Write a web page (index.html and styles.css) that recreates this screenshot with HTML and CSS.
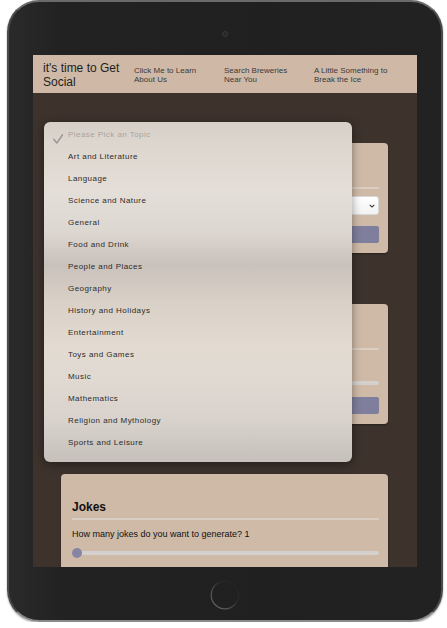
FILE: index.html
```html
<!DOCTYPE html>
<html lang="en">
<head>
<meta charset="utf-8">
<title>it's time to Get Social</title>
<link rel="stylesheet" href="styles.css">
</head>
<body>
<div class="device">
  <div class="bezel-top"><span class="camera"></span></div>
  <div class="screen">
    <header class="site-header">
      <h1 class="brand">it's time to Get Social</h1>
      <a class="nav-link" href="#">Click Me to Learn About Us</a>
      <a class="nav-link" href="#">Search Breweries Near You</a>
      <a class="nav-link" href="#">A Little Something to Break the Ice</a>
    </header>
    <main class="content">
      <section class="card">
        <h2 class="card-title">Trivia</h2>
        <hr class="rule">
        <div class="select-wrap">
          <select class="select">
            <option>Please Pick an Topic</option>
            <option>Art and Literature</option>
          </select>
          <svg class="chevron" viewBox="0 0 8 5" width="6" height="4"><path d="M1 1 L4 4 L7 1" fill="none" stroke="#333" stroke-width="1.4"/></svg>
        </div>
        <button class="btn">Get Questions</button>
      </section>
      <section class="card">
        <h2 class="card-title">Would You Rather</h2>
        <hr class="rule">
        <label class="label">How many questions do you want to generate? 1</label>
        <input class="range" type="range" min="1" max="10" value="1">
        <button class="btn">Generate</button>
      </section>
      <section class="card">
        <h2 class="card-title">Jokes</h2>
        <hr class="rule">
        <label class="label">How many jokes do you want to generate? 1</label>
        <input class="range" type="range" min="1" max="10" value="1">
        <button class="btn">Generate</button>
      </section>
    </main>
    <ul class="picker">
      <li class="option placeholder"><svg class="mark" viewBox="0 0 10 10" width="10" height="10"><path d="M0.8 5.2 L3.8 9 L9.6 0.8" fill="none" stroke="#9a9794" stroke-width="1.5" stroke-linecap="round" stroke-linejoin="round"/></svg><span>Please Pick an Topic</span></li>
      <li class="option"><span class="mark"></span><span>Art and Literature</span></li>
      <li class="option"><span class="mark"></span><span>Language</span></li>
      <li class="option"><span class="mark"></span><span>Science and Nature</span></li>
      <li class="option"><span class="mark"></span><span>General</span></li>
      <li class="option"><span class="mark"></span><span>Food and Drink</span></li>
      <li class="option"><span class="mark"></span><span>People and Places</span></li>
      <li class="option"><span class="mark"></span><span>Geography</span></li>
      <li class="option"><span class="mark"></span><span>History and Holidays</span></li>
      <li class="option"><span class="mark"></span><span>Entertainment</span></li>
      <li class="option"><span class="mark"></span><span>Toys and Games</span></li>
      <li class="option"><span class="mark"></span><span>Music</span></li>
      <li class="option"><span class="mark"></span><span>Mathematics</span></li>
      <li class="option"><span class="mark"></span><span>Religion and Mythology</span></li>
      <li class="option"><span class="mark"></span><span>Sports and Leisure</span></li>
    </ul>
  </div>
  <div class="bezel-bottom">
    <svg class="home" viewBox="0 0 30 30" width="30" height="30">
      <defs>
        <linearGradient id="homeGrad" x1="1" y1="0" x2="0" y2="1">
          <stop offset="0" stop-color="#202020"/>
          <stop offset="0.4" stop-color="#2a2a2a"/>
          <stop offset="0.7" stop-color="#555"/>
          <stop offset="1" stop-color="#6a6a6a"/>
        </linearGradient>
      </defs>
      <circle cx="15" cy="15" r="13.8" fill="none" stroke="url(#homeGrad)" stroke-width="1.2"/>
    </svg>
  </div>
</div>
</body>
</html>
```
FILE: styles.css
```css
* { box-sizing: border-box; }

html, body {
  margin: 0;
  padding: 0;
  background: #ffffff;
}

body {
  font-family: "Liberation Sans", Arial, sans-serif;
}

.device {
  margin-left: 7px;
  width: 436px;
  height: 622px;
  border: 2px solid #4b4b4b;
  border-top-color: #6a6a6a;
  border-bottom-color: #8a8a8a;
  border-radius: 32px;
  background: linear-gradient(90deg, #2a2a2a 0%, #222 12%, #202020 60%, #222 100%);
  box-shadow: 0 1px 2px rgba(0, 0, 0, 0.35);
  display: flex;
  flex-direction: column;
  align-items: center;
}

.bezel-top {
  height: 53px;
  display: flex;
  justify-content: center;
  padding-top: 29px;
}

.camera {
  width: 6px;
  height: 6px;
  border-radius: 50%;
  background: #262626;
  border: 1px solid #3a3a3a;
}

.screen {
  position: relative;
  width: 384px;
  height: 512px;
  flex: none;
  background: #3d322c;
  overflow: hidden;
}

.bezel-bottom {
  height: 53px;
  display: flex;
  justify-content: center;
  padding-top: 13px;
}

.home { display: block; }

/* header */
.site-header {
  background: #cfb9a6;
  padding: 6px 10px 4px;
  display: grid;
  grid-template-columns: 81px 80px 80px 80px;
  column-gap: 10px;
  align-items: center;
}

.brand {
  margin: 0;
  font-size: 12px;
  line-height: 14px;
  font-weight: normal;
  color: #1d1d1d;
}

.nav-link {
  font-size: 8px;
  line-height: 9.2px;
  color: #3a3a3a;
  text-decoration: none;
}

/* content */
.content {
  padding: 50px 29px 0 28px;
  display: flex;
  flex-direction: column;
  gap: 50.5px;
}

.card {
  background: #cfbaa7;
  border-radius: 4px;
  padding: 26px 9px 10px 11px;
  box-shadow: 0 1px 2px rgba(0, 0, 0, 0.35);
  display: flex;
  flex-direction: column;
}

.card-title {
  margin: 0;
  font-size: 12px;
  line-height: 14px;
  font-weight: bold;
  color: #111;
}

.rule {
  margin: 4px 0 0;
  border: 0;
  height: 2px;
  background: #dacdc1;
}

.select-wrap {
  position: relative;
  margin-top: 7px;
}

.select {
  display: block;
  width: 100%;
  height: 19px;
  margin: 0;
  -webkit-appearance: none;
  appearance: none;
  border: 1px solid #d8d8d8;
  border-radius: 3px;
  background: linear-gradient(#ffffff, #f2f2f2);
  font: 8px "Liberation Sans", Arial, sans-serif;
  color: #333;
  padding: 0 6px;
}

.chevron {
  position: absolute;
  right: 4px;
  top: 8px;
}

.btn {
  margin-top: 11px;
  height: 17px;
  width: 100%;
  border: 0;
  border-radius: 2px;
  background: #7f7f9d;
  color: #fff;
  font: 8px "Liberation Sans", Arial, sans-serif;
}

.label {
  margin-top: 9px;
  font-size: 9px;
  line-height: 10px;
  color: #111;
}

.range {
  -webkit-appearance: none;
  appearance: none;
  display: block;
  width: 100%;
  height: 10px;
  margin: 9px 0 0;
  background: transparent;
}

.range + .btn { margin-top: 9px; }

.range::-webkit-slider-runnable-track {
  height: 4px;
  border-radius: 2px;
  background: #d4d0cd;
}

.range::-webkit-slider-thumb {
  -webkit-appearance: none;
  appearance: none;
  width: 10px;
  height: 10px;
  border-radius: 50%;
  background: #8686a4;
  margin-top: -3px;
  border: 0;
}

/* open dropdown */
.picker {
  position: absolute;
  left: 11px;
  top: 67px;
  width: 308px;
  height: 340px;
  margin: 0;
  padding: 2px 0 0;
  list-style: none;
  border-radius: 6px;
  background: linear-gradient(180deg,
    #d6cfc7 0%,
    #ddd6ce 6%,
    #e4ded8 21%,
    #ddd7d2 32%,
    #c9c1bb 42%,
    #d9d0c7 53%,
    #e3dbd1 66%,
    #e0d9d2 76%,
    #d8d2cc 88%,
    #c6c0bb 100%);
  box-shadow: 0 2px 10px rgba(0, 0, 0, 0.4);
}

.option {
  display: flex;
  align-items: center;
  height: 22px;
  padding-left: 9px;
  font-size: 8px;
  line-height: 22px;
  letter-spacing: 0.45px;
  color: #2c2c2c;
}

.mark {
  flex: none;
  width: 10px;
  height: 10px;
  margin-right: 5px;
}

.placeholder { color: #a8a4a0; }

.placeholder .mark {
  align-self: flex-start;
  margin-top: 10px;
}
```
